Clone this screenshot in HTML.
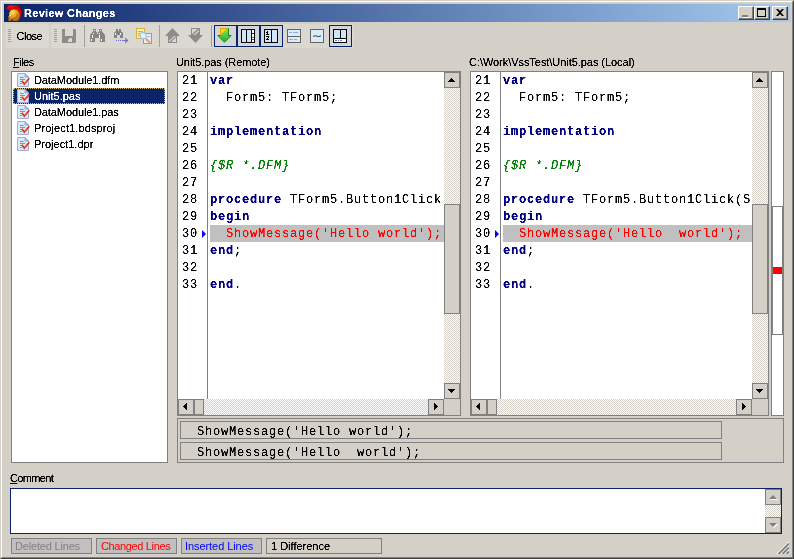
<!DOCTYPE html>
<html><head><meta charset="utf-8"><title>Review Changes</title>
<style>
*{box-sizing:border-box;margin:0;padding:0}
html,body{width:794px;height:559px;overflow:hidden;background:#d4d0c8}
body{position:relative;font-family:"Liberation Sans","DejaVu Sans",sans-serif;font-size:11px;color:#000}
.a{position:absolute}
.win{left:0;top:0;width:794px;height:559px;background:#d4d0c8;border-top:1px solid #d4d0c8;border-left:1px solid #d4d0c8;border-right:1px solid #404040;border-bottom:1px solid #404040}
.win2{left:1px;top:1px;width:792px;height:557px;border-top:1px solid #fff;border-left:1px solid #fff;border-right:1px solid #808080;border-bottom:1px solid #808080}
.title{left:4px;top:4px;width:786px;height:18px;background:linear-gradient(90deg,#0a246a,#a6caf0)}
.title .t{left:20px;top:2px;font-weight:bold;font-size:11px;letter-spacing:.3px;color:#fff;white-space:nowrap;line-height:14px}
.cb{top:6px;width:16px;height:14px;background:#d4d0c8;border-top:1px solid #fff;border-left:1px solid #fff;border-right:1px solid #404040;border-bottom:1px solid #404040}
.cb i{position:absolute;left:0;top:0;right:0;bottom:0;border-right:1px solid #808080;border-bottom:1px solid #808080}
.lbl{white-space:nowrap;line-height:13px;font-size:11px}
.sunk{border:1px solid #808080;background:#fff}
.mono{font-family:"Liberation Mono","DejaVu Sans Mono",monospace;font-size:12px;letter-spacing:.8px;white-space:pre;margin-top:1px}
.track{background:repeating-conic-gradient(#fff 0 25%,#d4d0c8 0 50%) 0 0/2px 2px}
.btn{background:#d4d0c8;border:1px solid #808080}
.sb{background:#d4d0c8;border:1px solid #808080}
.ln{left:0;width:284px;height:17px;line-height:17px}
.kw{font-weight:bold;color:#000080}
.cm{font-style:italic;color:#008000}
.ch{color:#ff0000}
.fi{left:22px}
.st{top:538px;height:16px;border:1px solid #808080;line-height:14px;padding-left:4px;white-space:nowrap;font-size:11px}
.grip{width:3px;height:13px;background:repeating-linear-gradient(180deg,#a0a0a0 0 1px,transparent 1px 2px)}
.mono,.lbl,.st,.title .t{filter:url(#na)}
</style></head><body>
<svg width="0" height="0" style="position:absolute"><filter id="na" x="-5%" y="-10%" width="110%" height="120%" color-interpolation-filters="sRGB"><feComponentTransfer><feFuncA type="table" tableValues="0 0 .6 1 1 1"/></feComponentTransfer></filter></svg>
<div class="a win"></div><div class="a win2"></div>
<div class="a title"><div class="a t">Review Changes</div></div>

<!-- caption buttons -->
<div class="a cb" style="left:738px"><i></i><div class="a" style="left:3px;top:8px;width:6px;height:2px;background:#808080"></div><div class="a" style="left:4px;top:10px;width:6px;height:1px;background:#fff"></div></div>
<div class="a cb" style="left:754px"><i></i><div class="a" style="left:2px;top:1px;width:9px;height:9px;border:1px solid #000;border-top-width:2px"></div></div>
<div class="a cb" style="left:772px"><i></i><svg class="a" style="left:3px;top:2px" width="8" height="7" viewBox="0 0 8 7"><path d="M0 0h2l2 2 2-2h2L5 3.5 8 7H6L4 5 2 7H0l3-3.5z" fill="#000"/></svg></div>

<!-- toolbar -->
<div class="a" style="left:5px;top:24px;width:44px;height:24px;background:#dbd8d1;border-radius:3px"></div>
<div class="a" style="left:51px;top:24px;width:303px;height:24px;background:#dbd8d1;border-radius:3px"></div>
<div class="a grip" style="left:8px;top:29px"></div>
<div class="a grip" style="left:54px;top:29px"></div>
<div class="a lbl" style="left:16.500px;top:30px;letter-spacing:-.5px">Close</div>


<svg class="a" style="left:0;top:0" width="794" height="60" viewBox="0 0 794 60">
<!-- helmet -->
<defs><radialGradient id="hg" cx="12.500" cy="12.500" r="9" gradientUnits="userSpaceOnUse"><stop offset="0" stop-color="#ffe468"/><stop offset=".45" stop-color="#e8a420"/><stop offset="1" stop-color="#a85c0c"/></radialGradient></defs>
<path d="M6 8.500L8 6l3-1h5l3.500 1.500 2 3 .5 3.500-.2 5h-1.300L20 14l-1.500-3L16 9.500 13 9l-2 1-1.200 1z" fill="#d40404"/>
<path d="M19.500 6.500l2 3 .5 3.500-.2 5" stroke="#2a0808" stroke-width=".7" fill="none"/>
<path d="M8.500 7l2.500-1.200M11.500 7.500l2-1" stroke="#f05050" stroke-width=".7"/>
<path d="M11 10q3-1.500 6 0 3 2 3 5.500l-.5 3.500-2 2H13v-1.500h-1.500L11 21H8.500l-.3-1.500L9 18l-1-1.200 1.200-1.300L9 13z" fill="url(#hg)"/>
<path d="M12.500 19q4-.5 5.500-5" stroke="#a05010" stroke-width=".8" fill="none"/>
<path d="M10 16l2-.5" stroke="#703008" stroke-width=".8"/>
<rect x="9.800" y="15" width="1.500" height="1.200" fill="#fff"/>
<!-- separators -->
<g fill="#a0a0a0" shape-rendering="crispEdges">
<rect x="84" y="25" width="1" height="22"/><rect x="159" y="25" width="1" height="22"/><rect x="211" y="25" width="1" height="22"/>
</g>
<!-- save (disabled) -->
<path d="M62 29h3v7h8v-7h2l1 1v12l-1 1H62z" fill="#8c8c8c"/>
<path d="M68 42v-2l2-2h2v4z" fill="#dbd8d1"/>
<!-- binoculars -->
<g fill="#848484">
<path d="M93 29h3v3h1v6h-2v4h-5v-7l3-3.500z"/><path d="M99 29h3v2.500l3 3.500v7h-5v-4h-2v-6h1z"/><rect x="96" y="34" width="3" height="4"/>
</g>
<g fill="#fff"><rect x="94" y="30" width="1" height="1"/><rect x="100" y="30" width="1" height="1"/><rect x="93" y="33" width="1" height="1"/><rect x="99" y="33" width="1" height="1"/><rect x="92" y="35" width="1" height="3"/><rect x="99" y="35" width="1" height="3"/><rect x="91" y="39" width="1" height="2"/><rect x="101" y="39" width="1" height="2"/></g>
<!-- find next -->
<g fill="#848484"><path d="M116 29h2v2h1v-2h2v2l2 2v5h-3v-3h-3v3h-3v-5l2-2z"/></g>
<g fill="#fff"><rect x="115" y="33" width="1" height="2"/><rect x="120" y="33" width="1" height="2"/></g>
<g fill="#7070c8"><rect x="116" y="40" width="1" height="1"/><rect x="118" y="40" width="1" height="1"/><rect x="120" y="40" width="1" height="1"/><rect x="122" y="40" width="5" height="1"/><path d="M125 37.500l3.500 3-3.500 3v-1.500l1.500-1.500-1.500-1.500z"/></g>
<!-- copy search -->
<rect x="136.500" y="28.500" width="8" height="10" fill="#f8f0a8" stroke="#d8b040"/>
<path d="M138 31.500h5M138 33.500h2M138 35.500h2" stroke="#b0a4c0"/>
<rect x="143.500" y="33.500" width="8" height="10" fill="#e4eefc" stroke="#8898d0"/>
<path d="M147.500 36.500h3M146 40.500h2" stroke="#a8b8e4"/>
<path d="M146 38.800l4 4" stroke="#f0a040" stroke-width="2.200"/>
<circle cx="143.200" cy="35.700" r="3.300" fill="#d8eefc" stroke="#98b8e0"/>
<path d="M141.500 34.500l3 2.500" stroke="#fff" stroke-width=".9"/>
<!-- up arrow -->
<path d="M172.500 28L180 36h-3v7h-9v-7h-3z" fill="#8c8c8c"/>
<path d="M169 42v-1.300l5.200-4.700h1.600z" fill="#e0ddd6"/>
<path d="M171 42l5-4.500V42z" fill="#dbd8d1"/>
<!-- down arrow -->
<path d="M191 28h9v7h3L195.500 43 188 35h3z" fill="#8c8c8c"/>
<path d="M192 29h5.500L192 34z" fill="#dbd8d1"/>
<path d="M193.200 35l5.800-5.300v1.500L194.800 35z" fill="#e0ddd6"/>
<!-- pressed buttons -->
<g fill="#d4d5d8" stroke="#0a246a" shape-rendering="crispEdges">
<rect x="214.500" y="25.500" width="22" height="21"/><rect x="237.500" y="25.500" width="22" height="21"/><rect x="260.500" y="25.500" width="22" height="21"/><rect x="329.500" y="25.500" width="22" height="21"/>
</g>
<!-- green arrow -->
<defs><linearGradient id="gg" x1="0" y1="0" x2="0" y2="1"><stop offset="0" stop-color="#80e870"/><stop offset="1" stop-color="#28a828"/></linearGradient></defs>
<path d="M220.500 28.500h8v7h2.700L224.500 42.300 217.800 35.500h2.700z" fill="url(#gg)" stroke="#109410" stroke-width="1"/>
<path d="M220.500 28.500h7.200l-7.200 6.600z" fill="#ffdc00" stroke="#e4a000" stroke-width="1"/>
<!-- columns icon -->
<g shape-rendering="crispEdges">
<rect x="241" y="29" width="14" height="14" fill="#000"/>
<rect x="242" y="30" width="4" height="12" fill="#cfe6f8"/><rect x="247" y="30" width="4" height="12" fill="#cfe6f8"/><rect x="252" y="30" width="2" height="12" fill="#fff"/>
<rect x="252" y="33" width="2" height="1" fill="#2020e0"/><rect x="252" y="37" width="2" height="1" fill="#20a020"/><rect x="252" y="39" width="2" height="1" fill="#e02020"/>
<!-- line numbers icon -->
<rect x="264" y="29" width="14" height="14" fill="#000"/>
<rect x="265" y="30" width="6" height="12" fill="#cfe6f8"/><rect x="272" y="30" width="5" height="12" fill="#cfe6f8"/>
<rect x="267" y="31" width="1" height="4" fill="#000"/><rect x="266" y="32" width="1" height="1" fill="#000"/><rect x="266" y="34" width="3" height="1" fill="#000"/>
<rect x="266" y="36" width="3" height="1" fill="#000"/><rect x="268" y="37" width="1" height="1" fill="#000"/><rect x="267" y="38" width="1" height="1" fill="#000"/><rect x="266" y="39" width="3" height="1" fill="#000"/>
<!-- horizontal split icon -->
<rect x="287" y="29" width="14" height="14" fill="#646464"/>
<rect x="288" y="30" width="12" height="6" fill="#d8ecfa"/><rect x="288" y="37" width="12" height="5" fill="#d8ecfa"/>
<rect x="289" y="32" width="3" height="1" fill="#90a8e0"/><rect x="293" y="32" width="5" height="1" fill="#90a8e0"/><rect x="289" y="39" width="4" height="1" fill="#90a8e0"/><rect x="294" y="39" width="3" height="1" fill="#90a8e0"/>
<!-- tilde icon -->
<rect x="310" y="29" width="14" height="14" fill="#646464"/>
<rect x="311" y="30" width="12" height="12" fill="#d8ecfa"/>
</g>
<path d="M313 36.500q2-1.500 4-.3t4-.5" stroke="#404040" fill="none" stroke-width="1"/>
<!-- layout icon -->
<g shape-rendering="crispEdges">
<rect x="333" y="29" width="14" height="14" fill="#000"/>
<rect x="334" y="30" width="6" height="8" fill="#cfe6f8"/><rect x="341" y="30" width="5" height="8" fill="#cfe6f8"/>
<rect x="334" y="39" width="12" height="3" fill="#fff"/>
<rect x="335" y="40" width="2" height="1" fill="#6080d0"/><rect x="338" y="40" width="1" height="1" fill="#6080d0"/><rect x="340" y="40" width="2" height="1" fill="#6080d0"/>
</g>
</svg>
<!-- labels -->
<div class="a lbl" style="left:13px;top:56px;letter-spacing:-.5px"><u>F</u>iles</div>
<div class="a lbl" style="left:176px;top:56px;letter-spacing:-.08px">Unit5.pas (Remote)</div>
<div class="a lbl" style="left:469px;top:56px;letter-spacing:-.05px">C:\Work\VssTest\Unit5.pas (Local)</div>
<div class="a lbl" style="left:10px;top:472px;letter-spacing:-.65px"><u>C</u>omment</div>

<!-- files list -->
<div class="a sunk" id="files" style="left:11px;top:71px;width:157px;height:392px">
 <div class="a" style="left:1px;top:16px;width:152px;height:16px;background:#0a246a;outline:1px dotted #d8c070;outline-offset:-1px"></div>
 <svg class="a" style="left:3px;top:0px" width="16" height="16" viewBox="0 0 16 16"><path d="M2.500 1.500h7.500l3.500 3.500v9.500h-11z" fill="#d6e8fa" stroke="#a4acdc"/><path d="M10 1.500v3.500h3.500z" fill="#9cc0f0" stroke="#90a4e0" stroke-width=".8"/><path d="M5 5.500h3.500M5 7.500h5M5 9.500h2M5 11.500h2" stroke="#6a94dc"/><path d="M7 8.800l2.300 3.400 5-6" stroke="#e03810" stroke-width="1.700" fill="none"/></svg><div class="a lbl fi" style="top:2px;letter-spacing:-.1px">DataModule1.dfm</div>
 <svg class="a" style="left:3px;top:16px" width="16" height="16" viewBox="0 0 16 16"><path d="M2.500 1.500h7.500l3.500 3.500v9.500h-11z" fill="#d6e8fa" stroke="#a4acdc"/><path d="M10 1.500v3.500h3.500z" fill="#9cc0f0" stroke="#90a4e0" stroke-width=".8"/><path d="M5 5.500h3.500M5 7.500h5M5 9.500h2M5 11.500h2" stroke="#6a94dc"/><path d="M7 8.800l2.300 3.400 5-6" stroke="#e03810" stroke-width="1.700" fill="none"/></svg><div class="a lbl fi" style="top:18px;color:#fff">Unit5.pas</div>
 <svg class="a" style="left:3px;top:32px" width="16" height="16" viewBox="0 0 16 16"><path d="M2.500 1.500h7.500l3.500 3.500v9.500h-11z" fill="#d6e8fa" stroke="#a4acdc"/><path d="M10 1.500v3.500h3.500z" fill="#9cc0f0" stroke="#90a4e0" stroke-width=".8"/><path d="M5 5.500h3.500M5 7.500h5M5 9.500h2M5 11.500h2" stroke="#6a94dc"/><path d="M7 8.800l2.300 3.400 5-6" stroke="#e03810" stroke-width="1.700" fill="none"/></svg><div class="a lbl fi" style="top:34px;letter-spacing:-.1px">DataModule1.pas</div>
 <svg class="a" style="left:3px;top:48px" width="16" height="16" viewBox="0 0 16 16"><path d="M2.500 1.500h7.500l3.500 3.500v9.500h-11z" fill="#d6e8fa" stroke="#a4acdc"/><path d="M10 1.500v3.500h3.500z" fill="#9cc0f0" stroke="#90a4e0" stroke-width=".8"/><path d="M5 5.500h3.500M5 7.500h5M5 9.500h2M5 11.500h2" stroke="#6a94dc"/><path d="M7 8.800l2.300 3.400 5-6" stroke="#e03810" stroke-width="1.700" fill="none"/></svg><div class="a lbl fi" style="top:50px;letter-spacing:.12px">Project1.bdsproj</div>
 <svg class="a" style="left:3px;top:64px" width="16" height="16" viewBox="0 0 16 16"><path d="M2.500 1.500h7.500l3.500 3.500v9.500h-11z" fill="#d6e8fa" stroke="#a4acdc"/><path d="M10 1.500v3.500h3.500z" fill="#9cc0f0" stroke="#90a4e0" stroke-width=".8"/><path d="M5 5.500h3.500M5 7.500h5M5 9.500h2M5 11.500h2" stroke="#6a94dc"/><path d="M7 8.800l2.300 3.400 5-6" stroke="#e03810" stroke-width="1.700" fill="none"/></svg><div class="a lbl fi" style="top:66px">Project1.dpr</div>
</div>
<div class="a sunk" style="left:177px;top:71px;width:284px;height:345px;overflow:hidden"><div class="a" style="left:0;top:0;width:266px;height:327px;overflow:hidden"><div class="a" style="left:29px;top:0;width:1px;height:327px;background:#808080"></div><div class="a mono" style="left:4px;top:0px;line-height:17px">21</div><div class="a mono" style="left:32px;top:0px;line-height:17px"><span class="kw">var</span></div><div class="a mono" style="left:4px;top:17px;line-height:17px">22</div><div class="a mono" style="left:32px;top:17px;line-height:17px">  Form5: TForm5;</div><div class="a mono" style="left:4px;top:34px;line-height:17px">23</div><div class="a mono" style="left:4px;top:51px;line-height:17px">24</div><div class="a mono" style="left:32px;top:51px;line-height:17px"><span class="kw">implementation</span></div><div class="a mono" style="left:4px;top:68px;line-height:17px">25</div><div class="a mono" style="left:4px;top:85px;line-height:17px">26</div><div class="a mono" style="left:32px;top:85px;line-height:17px"><span class="cm">{$R *.DFM}</span></div><div class="a mono" style="left:4px;top:102px;line-height:17px">27</div><div class="a mono" style="left:4px;top:119px;line-height:17px">28</div><div class="a mono" style="left:32px;top:119px;line-height:17px"><span class="kw">procedure</span> TForm5.Button1Click</div><div class="a mono" style="left:4px;top:136px;line-height:17px">29</div><div class="a mono" style="left:32px;top:136px;line-height:17px"><span class="kw">begin</span></div><div class="a mono" style="left:4px;top:153px;line-height:17px">30</div><div class="a" style="left:32px;top:153px;width:400px;height:17px;background:#c0c0c0"></div><div class="a" style="left:24px;top:158px;width:0;height:0;border-left:4px solid #0000ff;border-top:4px solid transparent;border-bottom:4px solid transparent"></div><div class="a mono ch" style="left:32px;top:153px;line-height:17px">  ShowMessage('Hello world');</div><div class="a mono" style="left:4px;top:170px;line-height:17px">31</div><div class="a mono" style="left:32px;top:170px;line-height:17px"><span class="kw">end</span>;</div><div class="a mono" style="left:4px;top:187px;line-height:17px">32</div><div class="a mono" style="left:4px;top:204px;line-height:17px">33</div><div class="a mono" style="left:32px;top:204px;line-height:17px"><span class="kw">end</span>.</div></div><div class="a track" style="left:266px;top:0;width:16px;height:327px"></div><div class="a sb" style="left:266px;top:0;width:16px;height:16px"><svg class="a" style="left:3px;top:5px" width="7" height="4" shape-rendering="crispEdges"><path d="M3 0h1v1H3zM2 1h3v1H2zM1 2h5v1H1zM0 3h7v1H0z"/></svg></div><div class="a sb" style="left:266px;top:311px;width:16px;height:16px"><svg class="a" style="left:3px;top:5px" width="7" height="4" shape-rendering="crispEdges"><path d="M0 0h7v1H0zM1 1h5v1H1zM2 2h3v1H2zM3 3h1v1H3z"/></svg></div><div class="a sb" style="left:266px;top:132px;width:16px;height:110px"></div><div class="a track" style="left:0;top:327px;width:266px;height:16px"></div><div class="a sb" style="left:0;top:327px;width:16px;height:16px"><svg class="a" style="left:4px;top:3px" width="4" height="7" shape-rendering="crispEdges"><path d="M3 0h1v7H3zM2 1h1v5H2zM1 2h1v3H1zM0 3h1v1H0z"/></svg></div><div class="a sb" style="left:16px;top:327px;width:10px;height:16px"></div><div class="a sb" style="left:250px;top:327px;width:16px;height:16px"><svg class="a" style="left:5px;top:3px" width="4" height="7" shape-rendering="crispEdges"><path d="M0 0h1v7H0zM1 1h1v5H1zM2 2h1v3H2zM3 3h1v1H3z"/></svg></div><div class="a" style="left:266px;top:327px;width:16px;height:16px;background:#d4d0c8"></div></div><div class="a sunk" style="left:470px;top:71px;width:299px;height:345px;overflow:hidden"><div class="a" style="left:0;top:0;width:281px;height:327px;overflow:hidden"><div class="a" style="left:29px;top:0;width:1px;height:327px;background:#808080"></div><div class="a mono" style="left:4px;top:0px;line-height:17px">21</div><div class="a mono" style="left:32px;top:0px;line-height:17px"><span class="kw">var</span></div><div class="a mono" style="left:4px;top:17px;line-height:17px">22</div><div class="a mono" style="left:32px;top:17px;line-height:17px">  Form5: TForm5;</div><div class="a mono" style="left:4px;top:34px;line-height:17px">23</div><div class="a mono" style="left:4px;top:51px;line-height:17px">24</div><div class="a mono" style="left:32px;top:51px;line-height:17px"><span class="kw">implementation</span></div><div class="a mono" style="left:4px;top:68px;line-height:17px">25</div><div class="a mono" style="left:4px;top:85px;line-height:17px">26</div><div class="a mono" style="left:32px;top:85px;line-height:17px"><span class="cm">{$R *.DFM}</span></div><div class="a mono" style="left:4px;top:102px;line-height:17px">27</div><div class="a mono" style="left:4px;top:119px;line-height:17px">28</div><div class="a mono" style="left:32px;top:119px;line-height:17px"><span class="kw">procedure</span> TForm5.Button1Click(S</div><div class="a mono" style="left:4px;top:136px;line-height:17px">29</div><div class="a mono" style="left:32px;top:136px;line-height:17px"><span class="kw">begin</span></div><div class="a mono" style="left:4px;top:153px;line-height:17px">30</div><div class="a" style="left:32px;top:153px;width:400px;height:17px;background:#c0c0c0"></div><div class="a" style="left:24px;top:158px;width:0;height:0;border-left:4px solid #0000ff;border-top:4px solid transparent;border-bottom:4px solid transparent"></div><div class="a mono ch" style="left:32px;top:153px;line-height:17px">  ShowMessage('Hello  world');</div><div class="a mono" style="left:4px;top:170px;line-height:17px">31</div><div class="a mono" style="left:32px;top:170px;line-height:17px"><span class="kw">end</span>;</div><div class="a mono" style="left:4px;top:187px;line-height:17px">32</div><div class="a mono" style="left:4px;top:204px;line-height:17px">33</div><div class="a mono" style="left:32px;top:204px;line-height:17px"><span class="kw">end</span>.</div></div><div class="a track" style="left:281px;top:0;width:16px;height:327px"></div><div class="a sb" style="left:281px;top:0;width:16px;height:16px"><svg class="a" style="left:3px;top:5px" width="7" height="4" shape-rendering="crispEdges"><path d="M3 0h1v1H3zM2 1h3v1H2zM1 2h5v1H1zM0 3h7v1H0z"/></svg></div><div class="a sb" style="left:281px;top:311px;width:16px;height:16px"><svg class="a" style="left:3px;top:5px" width="7" height="4" shape-rendering="crispEdges"><path d="M0 0h7v1H0zM1 1h5v1H1zM2 2h3v1H2zM3 3h1v1H3z"/></svg></div><div class="a sb" style="left:281px;top:132px;width:16px;height:110px"></div><div class="a track" style="left:0;top:327px;width:281px;height:16px"></div><div class="a sb" style="left:0;top:327px;width:16px;height:16px"><svg class="a" style="left:4px;top:3px" width="4" height="7" shape-rendering="crispEdges"><path d="M3 0h1v7H3zM2 1h1v5H2zM1 2h1v3H1zM0 3h1v1H0z"/></svg></div><div class="a sb" style="left:16px;top:327px;width:10px;height:16px"></div><div class="a sb" style="left:265px;top:327px;width:16px;height:16px"><svg class="a" style="left:5px;top:3px" width="4" height="7" shape-rendering="crispEdges"><path d="M0 0h1v7H0zM1 1h1v5H1zM2 2h1v3H2zM3 3h1v1H3z"/></svg></div><div class="a" style="left:281px;top:327px;width:16px;height:16px;background:#d4d0c8"></div></div>
<!-- overview -->
<div class="a sunk" style="left:771px;top:71px;width:13px;height:345px">
 <div class="a" style="left:0;top:134px;width:11px;height:129px;border:1px solid #808080"></div>
 <div class="a" style="left:1px;top:195px;width:9px;height:7px;background:#ff0000"></div>
</div>
<!-- diff lines -->
<div class="a" style="left:177px;top:418px;width:607px;height:45px;border:1px solid #808080"></div>
<div class="a" style="left:180px;top:421px;width:542px;height:18px;border:1px solid #808080"></div>
<div class="a" style="left:180px;top:442px;width:542px;height:18px;border:1px solid #808080"></div>
<div class="a mono" style="left:181px;top:422px;line-height:18px">  ShowMessage('Hello world');</div>
<div class="a mono" style="left:181px;top:443px;line-height:18px">  ShowMessage('Hello  world');</div>

<!-- comment box -->
<div class="a" style="left:10px;top:488px;width:772px;height:46px;background:#fff;border:1px solid #0a246a">
 <div class="a track" style="left:754px;top:0;width:16px;height:44px"></div>
 <div class="a sb" style="left:754px;top:0;width:16px;height:16px"><div class="a" style="left:4px;top:6px;border-bottom:4px solid #fff;border-left:4px solid transparent;border-right:4px solid transparent"></div><div class="a" style="left:3px;top:5px;border-bottom:4px solid #808080;border-left:4px solid transparent;border-right:4px solid transparent"></div></div>
 <div class="a sb" style="left:754px;top:28px;width:16px;height:16px"><div class="a" style="left:4px;top:6px;border-top:4px solid #fff;border-left:4px solid transparent;border-right:4px solid transparent"></div><div class="a" style="left:3px;top:5px;border-top:4px solid #808080;border-left:4px solid transparent;border-right:4px solid transparent"></div></div>
</div>

<svg class="a" style="left:777px;top:542px" width="12" height="12" viewBox="0 0 12 12"><path d="M0 12L12 0M4 12l8-8M8 12l4-4" stroke="#fff" stroke-width="1.300"/><path d="M1.500 12L12 1.500M5.500 12L12 5.500M9.500 12L12 9.500" stroke="#808080" stroke-width="1.900"/></svg>
<!-- status bar -->
<div class="a st" style="left:11px;width:81px;color:#808080;background:#c0c0c0;padding-left:3px;letter-spacing:-.18px">Deleted Lines</div>
<div class="a st" style="left:96px;width:81px;color:#ff0000;background:#c0c0c0;letter-spacing:-.36px">Changed Lines</div>
<div class="a st" style="left:181px;width:81px;color:#0000ff;background:#c0c0c0;padding-left:3px;letter-spacing:-.07px">Inserted Lines</div>
<div class="a st" style="left:266px;width:116px">1 Difference</div>
</body></html>
